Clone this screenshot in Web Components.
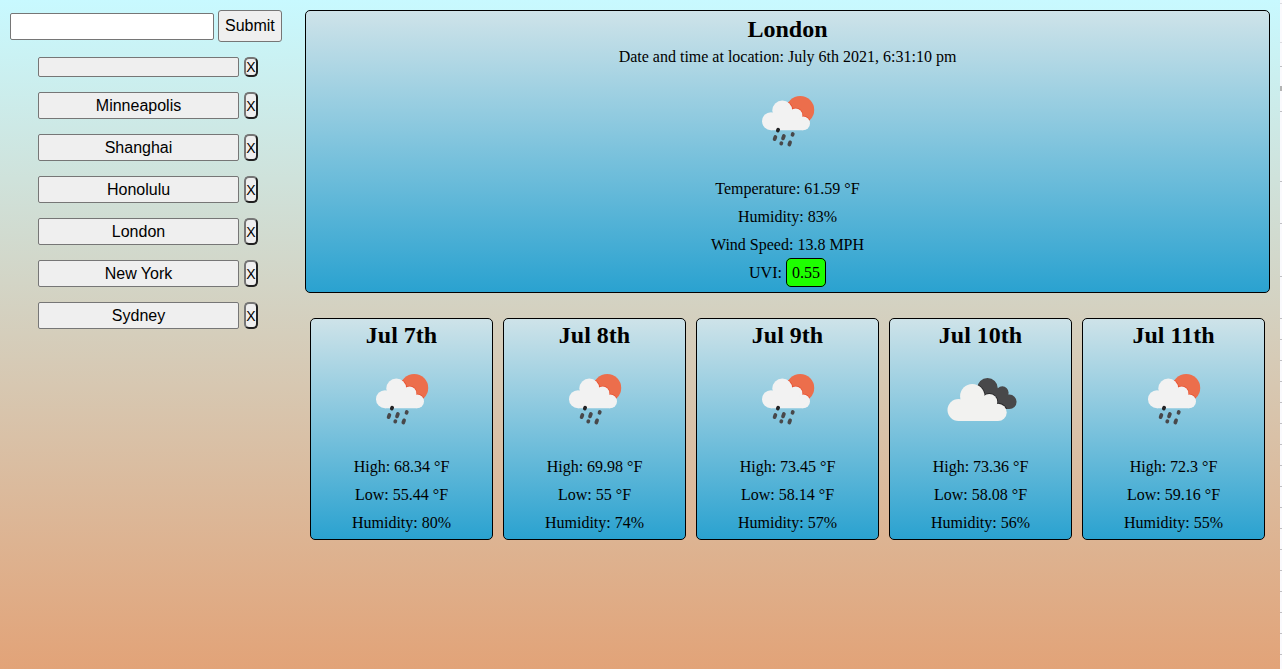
<!DOCTYPE html>
<html lang="en">
<head>
<meta charset="utf-8">
<title>Weather Dashboard</title>
<style>
  html, body { margin: 0; min-height: 100vh; }
  body { font: 16px/28px "Liberation Serif", "Times New Roman", serif; color: #000; }
</style>
</head>
<body>
<weather-app></weather-app>

<template id="app-template">
  <style>
    :host { display: grid; grid-template-columns: minmax(0, 1fr) 2px; min-height: 100vh; }
    .page { display: flex; gap: 20px; box-sizing: border-box; padding: 10px; background: linear-gradient(#c8f9ff, #e2a378); }
    city-search { flex: 0 0 275px; }
    main { flex: 1; min-width: 0; }
    .forecast { display: grid; grid-template-columns: repeat(5, minmax(0, 1fr)); gap: 10px; padding: 25px 5px 0; }
    .edge {
      --paper: #fafafd;
      --line: #c0c0c4;
      background:
        linear-gradient(var(--paper) 3px, #dcdce0 3px 4px, var(--paper) 4px 42px, #dcdce0 42px 43px, var(--paper) 43px 66px, var(--line) 66px 67px, var(--paper) 67px 86px, #b4b4b4 86px 91px, var(--paper) 91px 111px, var(--line) 111px 112px, var(--paper) 112px 181px, var(--line) 181px 182px, var(--paper) 182px 223px, var(--line) 223px 224px, var(--paper) 224px 276px, var(--line) 276px 277px, var(--paper) 277px) 0 0 / 100% 300px no-repeat,
        repeating-linear-gradient(var(--paper) 0 3px, var(--line) 3px 4px, var(--paper) 4px 21px);
    }
  </style>
  <div class="page">
    <city-search></city-search>
    <main>
      <current-weather></current-weather>
      <section class="forecast" aria-label="Five day forecast">
        <forecast-card icon="rain"><span slot="day">Jul 7th</span><span slot="high">68.34</span><span slot="low">55.44</span><span slot="humidity">80</span></forecast-card>
        <forecast-card icon="rain"><span slot="day">Jul 8th</span><span slot="high">69.98</span><span slot="low">55</span><span slot="humidity">74</span></forecast-card>
        <forecast-card icon="rain"><span slot="day">Jul 9th</span><span slot="high">73.45</span><span slot="low">58.14</span><span slot="humidity">57</span></forecast-card>
        <forecast-card icon="clouds"><span slot="day">Jul 10th</span><span slot="high">73.36</span><span slot="low">58.08</span><span slot="humidity">56</span></forecast-card>
        <forecast-card icon="rain"><span slot="day">Jul 11th</span><span slot="high">72.3</span><span slot="low">59.16</span><span slot="humidity">55</span></forecast-card>
      </section>
    </main>
  </div>
  <div class="edge"></div>
</template>

<template id="search-template">
  <style>
    :host { display: block; }
    form { display: flex; align-items: center; gap: 4px; }
    input, .submit { box-sizing: border-box; margin: 0; border: 1px solid #767676; font: 16px "Liberation Sans", Arial, sans-serif; color: #000; }
    input { width: 204px; height: 27px; padding: 1px 2px; border-radius: 2px; background: #fff; }
    .submit { height: 32px; padding: 0 6px 1px; border-radius: 3px; background: #efefef; }
    ul { display: grid; gap: 15px; margin: 15px 0 0; padding: 0 0 0 28px; list-style: none; }
  </style>
  <form>
    <input type="text" aria-label="City">
    <button class="submit" type="button">Submit</button>
  </form>
  <ul>
    <li><city-row></city-row></li>
    <li><city-row>Minneapolis</city-row></li>
    <li><city-row>Shanghai</city-row></li>
    <li><city-row>Honolulu</city-row></li>
    <li><city-row>London</city-row></li>
    <li><city-row>New York</city-row></li>
    <li><city-row>Sydney</city-row></li>
  </ul>
</template>

<template id="row-template">
  <style>
    :host { display: flex; gap: 5px; height: 27px; }
    :host(:empty) { height: 20px; }
    button { box-sizing: border-box; margin: 0; padding: 0; color: #000; background: #efefef; font-family: "Liberation Sans", Arial, sans-serif; }
    .city { width: 201px; border: 1px solid #767676; border-radius: 2px; font-size: 16px; }
    .remove { width: 14px; border: 2px solid; border-color: #767676 #212121 #212121 #767676; border-radius: 5px; font-size: 14px; }
  </style>
  <button class="city" type="button"><slot></slot></button>
  <button class="remove" type="button">X</button>
</template>

<template id="current-template">
  <style>
    :host { display: block; padding: 5px; border: 1px solid #000; border-radius: 5px; background: linear-gradient(#cee3e9, #2aa2d0); text-align: center; }
    h2 { margin: 0; font-size: 24px; line-height: 27px; }
    p { margin: 0; }
    .uvi { padding: 5px; border: 1px solid #000; border-radius: 5px; background: #1eff00; }
  </style>
  <h2>London</h2>
  <p>Date and time at location: July 6th 2021, 6:31:10 pm</p>
  <weather-icon name="rain"></weather-icon>
  <p>Temperature: 61.59 °F</p>
  <p>Humidity: 83%</p>
  <p>Wind Speed: 13.8 MPH</p>
  <p>UVI: <span class="uvi">0.55</span></p>
</template>

<template id="forecast-template">
  <style>
    :host { display: block; padding: 3px 0 2px; border: 1px solid #000; border-radius: 5px; background: linear-gradient(#cee3e9, #2aa2d0); text-align: center; }
    h2 { margin: 0; font-size: 24px; line-height: 27px; }
    p { margin: 0; }
  </style>
  <h2><slot name="day"></slot></h2>
  <weather-icon></weather-icon>
  <p>High: <slot name="high"></slot> °F</p>
  <p>Low: <slot name="low"></slot> °F</p>
  <p>Humidity: <slot name="humidity"></slot>%</p>
</template>

<template id="rain-template">
  <svg viewBox="0 0 100 100" aria-hidden="true">
    <defs>
      <clipPath id="sun"><circle cx="62.2" cy="38.9" r="14"/></clipPath>
      <g id="cloud">
        <circle cx="33" cy="50.2" r="9"/><circle cx="44.3" cy="39.6" r="10"/><circle cx="57.6" cy="44.4" r="6.8"/><circle cx="65.1" cy="52.4" r="6.9"/>
        <path d="M33 59.3V46L44 38l14 5 7 8v8.3z"/>
      </g>
    </defs>
    <circle cx="62.2" cy="38.9" r="14" fill="#ec6e4c"/>
    <use href="#cloud" clip-path="url(#sun)" fill="#e8502f" stroke="#e8502f" stroke-width="1.6"/>
    <use href="#cloud" fill="#f2f2f2"/>
    <g fill="none" stroke="#48484a" stroke-width="3.7" stroke-linecap="round">
      <path d="M39.8 59.5l.4-.9" stroke="#242426"/>
      <path d="M36.6 68.2l.8-2.2M45 67.4l.9-2.4M54.5 63.8l.3-.8M43.2 72.6l.2-.4M51.3 73.5l.8-2.2"/>
    </g>
  </svg>
</template>

<template id="clouds-template">
  <svg viewBox="0 0 100 100" aria-hidden="true">
    <defs>
      <clipPath id="back">
        <circle cx="56.5" cy="39.3" r="10.3"/><circle cx="71.3" cy="43.6" r="6.3"/><circle cx="78.3" cy="52.8" r="7.3"/>
        <path d="M50 45l7-9 14 6 8 9v9H60z"/>
      </clipPath>
      <g id="front">
        <circle cx="27.5" cy="61" r="11"/><circle cx="41.3" cy="47.2" r="12.2"/><circle cx="58.3" cy="53" r="8"/><circle cx="67" cy="63.4" r="8.7"/>
        <path d="M27.5 72V56L41 46l17 6 9 10v10z"/>
      </g>
    </defs>
    <path clip-path="url(#back)" d="M0 0h100v100H0z" fill="#48484a"/>
    <use href="#front" clip-path="url(#back)" fill="#29292b" stroke="#29292b" stroke-width="1.8"/>
    <use href="#front" fill="#f2f2f0"/>
  </svg>
</template>

<script>
  const cloneOf = id => document.getElementById(id).content.cloneNode(true);

  class TemplateElement extends HTMLElement {
    constructor() {
      super();
      this.attachShadow({ mode: "open" }).append(cloneOf(this.constructor.template));
    }
  }

  // Draws one of the named weather pictures.
  class WeatherIcon extends HTMLElement {
    static observedAttributes = ["name"];
    constructor() {
      super();
      this.attachShadow({ mode: "open" });
    }
    attributeChangedCallback(attribute, previous, name) {
      const style = document.createElement("style");
      style.textContent = ":host { display: block; padding-bottom: 4px; } svg { display: block; width: 100px; height: 100px; margin: 0 auto; }";
      this.shadowRoot.replaceChildren(style, cloneOf(name + "-template"));
    }
  }

  class CityRow extends TemplateElement {
    static template = "row-template";
    connectedCallback() {
      const city = this.textContent.trim();
      this.shadowRoot.querySelector(".city").setAttribute("aria-label", city || "Unnamed city");
      this.shadowRoot.querySelector(".remove").addEventListener("click", () => this.parentElement.remove());
    }
  }

  class ForecastCard extends TemplateElement {
    static template = "forecast-template";
    connectedCallback() {
      this.shadowRoot.querySelector("weather-icon").setAttribute("name", this.getAttribute("icon"));
    }
  }

  customElements.define("weather-icon", WeatherIcon);
  customElements.define("city-row", CityRow);
  customElements.define("forecast-card", ForecastCard);
  customElements.define("city-search", class extends TemplateElement { static template = "search-template"; });
  customElements.define("current-weather", class extends TemplateElement { static template = "current-template"; });
  customElements.define("weather-app", class extends TemplateElement { static template = "app-template"; });
</script>
</body>
</html>
